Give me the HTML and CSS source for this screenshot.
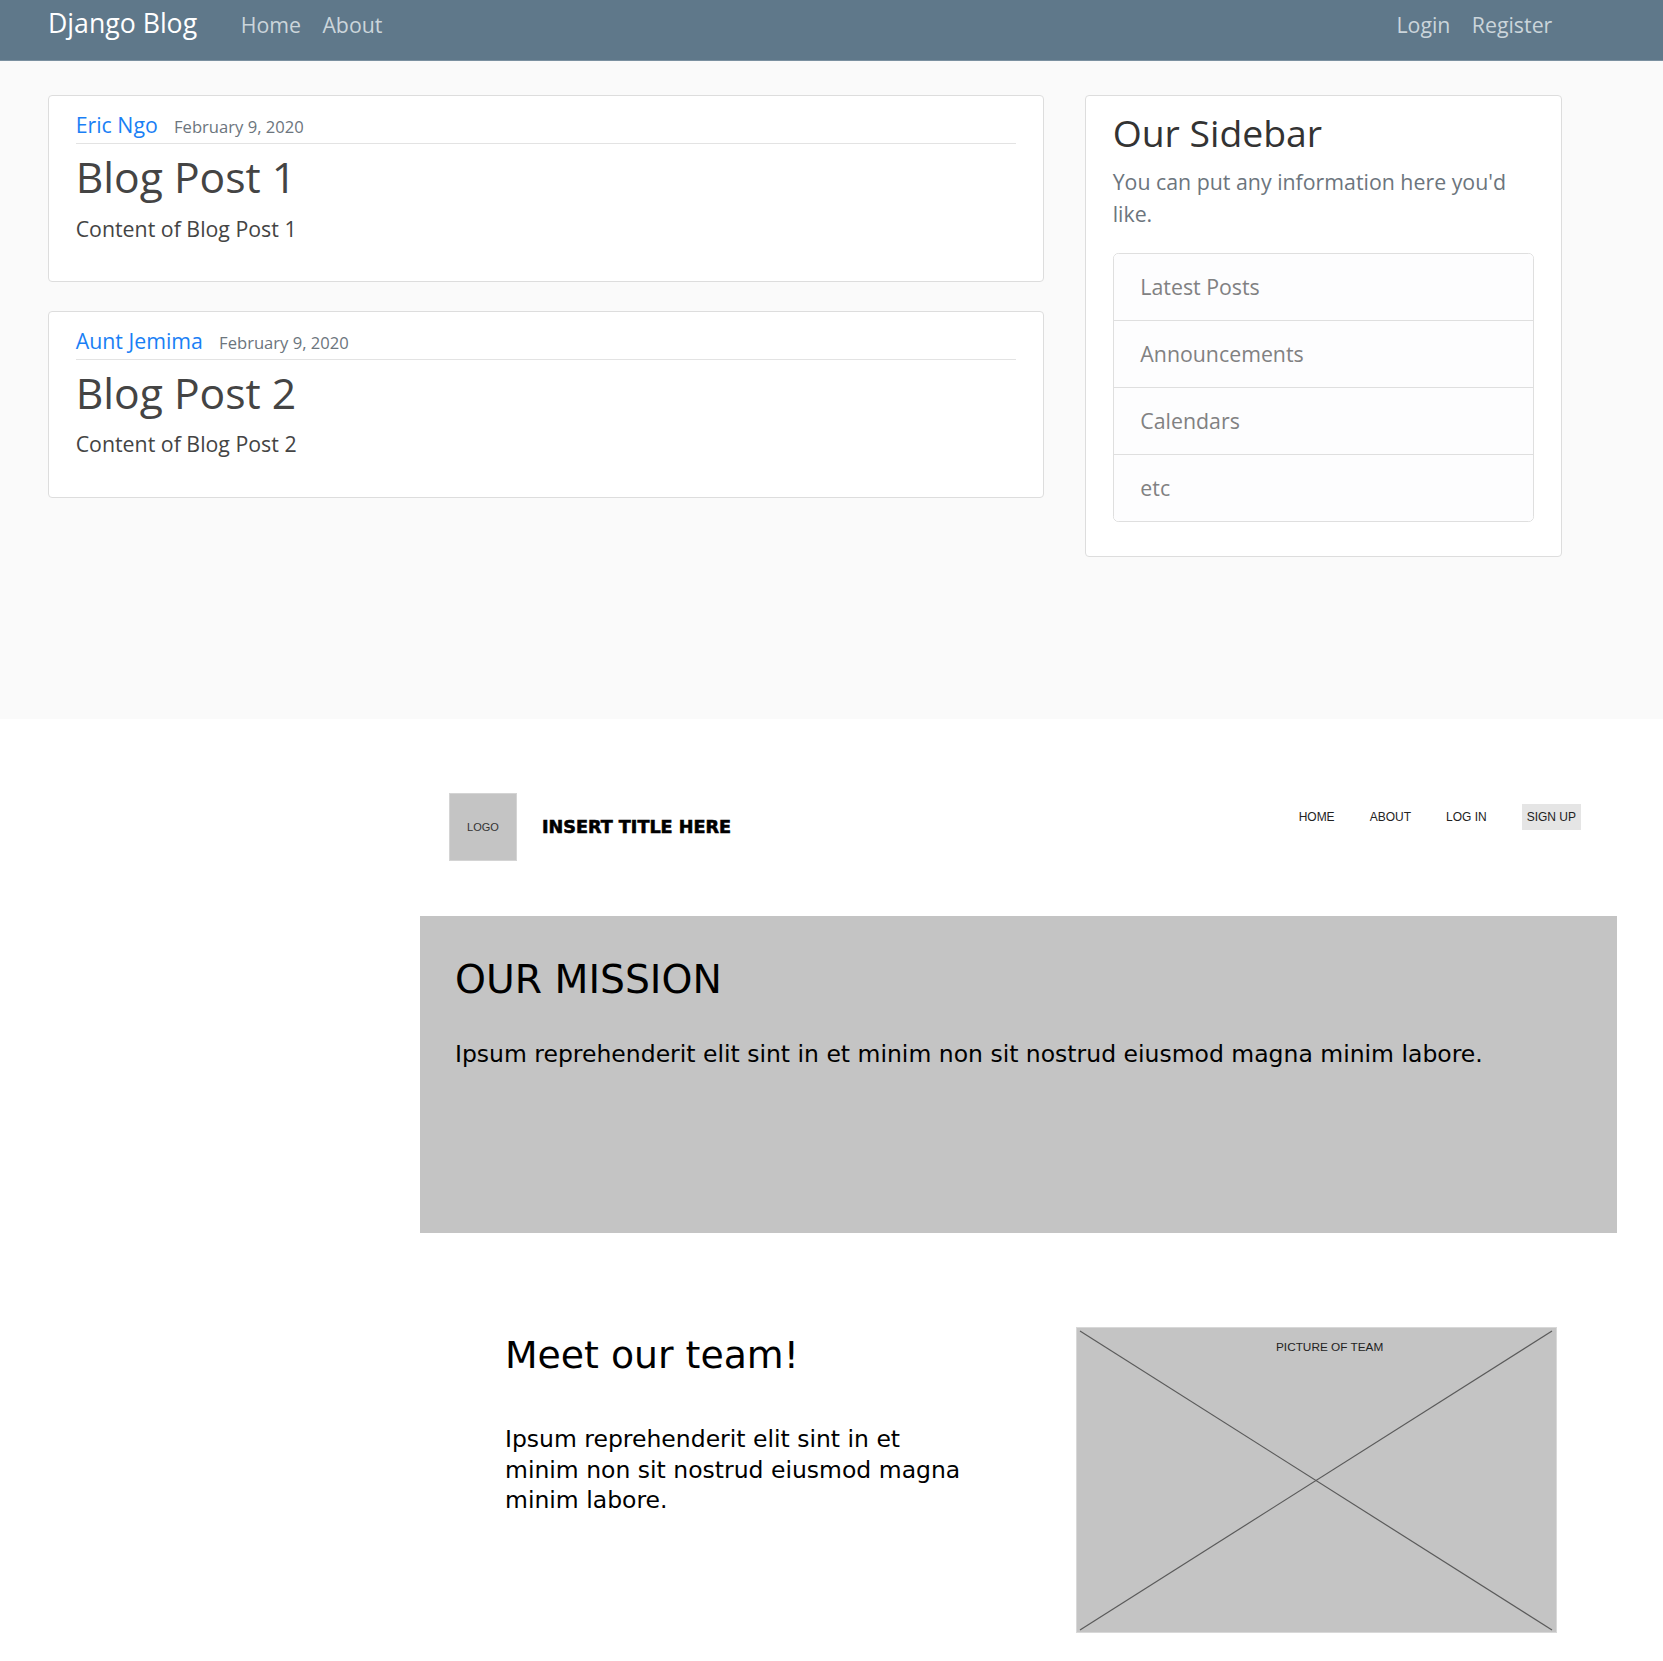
FILE: index.html
```html
<!DOCTYPE html>
<html lang="en">
<head>
<meta charset="utf-8">
<title>Django Blog</title>
<link rel="stylesheet" href="styles.css">
</head>
<body>
<section class="blog">
  <header class="site-header">
    <nav class="nav-inner">
      <a class="brand" href="#">Django Blog</a>
      <div class="nav-group">
        <a class="nav-link" href="#">Home</a>
        <a class="nav-link" href="#">About</a>
      </div>
      <div class="nav-group nav-right">
        <a class="nav-link" href="#">Login</a>
        <a class="nav-link" href="#">Register</a>
      </div>
    </nav>
  </header>
  <main class="blog-main">
    <div class="posts">
      <article class="content-section">
        <div class="article-metadata">
          <a class="author" href="#">Eric Ngo</a> <small class="date">February 9, 2020</small>
        </div>
        <h2 class="article-title">Blog Post 1</h2>
        <p class="article-content">Content of Blog Post 1</p>
      </article>
      <article class="content-section">
        <div class="article-metadata">
          <a class="author" href="#">Aunt Jemima</a> <small class="date">February 9, 2020</small>
        </div>
        <h2 class="article-title">Blog Post 2</h2>
        <p class="article-content">Content of Blog Post 2</p>
      </article>
    </div>
    <aside class="sidebar">
      <div class="content-section side-section">
        <h3 class="side-title">Our Sidebar</h3>
        <p class="text-muted">You can put any information here you'd like.</p>
        <ul class="list-group">
          <li class="list-item">Latest Posts</li>
          <li class="list-item">Announcements</li>
          <li class="list-item">Calendars</li>
          <li class="list-item">etc</li>
        </ul>
      </div>
    </aside>
  </main>
</section>

<section class="wire">
  <header class="wire-header">
    <div class="logo">LOGO</div>
    <div class="wire-title">INSERT TITLE HERE</div>
    <nav class="wire-nav">
      <a href="#">HOME</a>
      <a href="#">ABOUT</a>
      <a href="#">LOG IN</a>
      <a href="#" class="signup">SIGN UP</a>
    </nav>
  </header>
  <div class="mission">
    <h2 class="mission-title">OUR MISSION</h2>
    <p class="mission-text">Ipsum reprehenderit elit sint in et minim non sit nostrud eiusmod magna minim labore.</p>
  </div>
  <div class="team">
    <div class="team-text">
      <h2 class="team-title">Meet our team!</h2>
      <p class="team-desc">Ipsum reprehenderit elit sint in et minim non sit nostrud eiusmod magna minim labore.</p>
    </div>
    <div class="team-pic">
      <svg class="pic-x" viewBox="0 0 481 306" preserveAspectRatio="none">
        <line x1="3" y1="3" x2="477" y2="304" stroke="#5a5a5a" stroke-width="1.2"/>
        <line x1="477" y1="3" x2="3" y2="304" stroke="#5a5a5a" stroke-width="1.2"/>
      </svg>
      <span class="pic-label">PICTURE OF TEAM</span>
    </div>
  </div>
</section>
</body>
</html>
```

FILE: styles.css
```css
* { box-sizing: border-box; }

html, body {
  margin: 0;
  padding: 0;
  background: #ffffff;
}

/* ---------- Blog (top) ---------- */
.blog {
  height: 719px;
  background: #fafafa;
  font-family: "Open Sans", "Noto Sans", sans-serif;
  color: #333333;
}

.site-header {
  height: 61px;
  background: #5f788a;
  border-bottom: 1px solid #7b90a0;
}

.nav-inner {
  width: 1515px;
  margin-left: 48px;
  display: flex;
  align-items: baseline;
  padding-top: 3px;
}

.brand {
  font-size: 26.67px;
  line-height: 40px;
  color: #ffffff;
  text-decoration: none;
  margin-right: 33px;
}

.nav-group {
  display: flex;
  align-items: baseline;
}

.nav-right {
  margin-left: auto;
}

.nav-link {
  font-size: 21.33px;
  line-height: 32px;
  padding: 0 10.67px;
  color: #cbd5db;
  text-decoration: none;
}

.blog-main {
  width: 1514px;
  margin-left: 48px;
  padding-top: 34px;
  display: grid;
  grid-template-columns: 996px 477px;
  column-gap: 41px;
  align-items: start;
}

.content-section {
  background: #ffffff;
  border: 1px solid #dddddd;
  border-radius: 4px;
  padding: 13.33px 26.67px;
  margin-bottom: 29px;
}

.article-metadata {
  font-size: 21.33px;
  line-height: 32px;
  padding-bottom: 1.33px;
  margin-bottom: 5.33px;
  border-bottom: 1px solid #e3e3e3;
}

.author {
  color: #1a7ff5;
  text-decoration: none;
  margin-right: 10.67px;
}

.date {
  font-size: 16.6px;
  line-height: 1;
  color: #6c757d;
}

.article-title {
  font-size: 42.67px;
  font-weight: 400;
  line-height: 1.2;
  color: #444444;
  margin: 7px 0 10.67px;
}

.article-content {
  font-size: 21.33px;
  line-height: 32px;
  color: #444444;
  margin: 0 0 23px;
}

.side-section {
  margin-bottom: 0;
}

.side-title {
  font-size: 37.33px;
  font-weight: 400;
  line-height: 1.2;
  color: #333333;
  margin: 2px 0 10.67px;
}

.text-muted {
  font-size: 21.33px;
  line-height: 32px;
  color: #6c757d;
  margin: -1px 0 23px;
}

.list-group {
  list-style: none;
  margin: 0 0 21.33px;
  padding: 0;
  border: 1px solid #dfdfdf;
  border-radius: 5.33px;
  overflow: hidden;
}

.list-item {
  font-size: 21.33px;
  line-height: 32px;
  padding: 17px 26.67px 16px;
  background: #fdfdfe;
  color: #818182;
  border-top: 1px solid #dfdfdf;
  height: 67px;
}

.list-item:first-child {
  border-top: none;
  height: 66px;
}

/* ---------- Wireframe (bottom) ---------- */
.wire {
  margin-left: 420px;
  width: 1197px;
  padding-top: 74px;
  padding-bottom: 28px;
  font-family: "DejaVu Sans", "Liberation Sans", sans-serif;
  color: #000000;
}

.wire-header {
  display: flex;
  align-items: center;
  padding: 0 36px 0 29px;
}

.logo {
  width: 68px;
  height: 68px;
  background: #c4c4c4;
  border: 1px solid #d4d4d4;
  display: flex;
  align-items: center;
  justify-content: center;
  font-family: "Liberation Sans", Arial, sans-serif;
  font-size: 11px;
  color: #333333;
}

.wire-title {
  margin-left: 25px;
  font-weight: 700;
  font-size: 17.6px;
  -webkit-text-stroke: 0.6px #000000;
  color: #000000;
}

.wire-nav {
  margin-left: auto;
  align-self: flex-start;
  margin-top: 11px;
  display: flex;
  gap: 35px;
}

.wire-nav a {
  font-family: "Liberation Sans", Arial, sans-serif;
  font-size: 12px;
  line-height: 26px;
  color: #222222;
  text-decoration: none;
}

.wire-nav .signup {
  background: #e5e5e5;
  padding: 0 5px;
}

.mission {
  margin-top: 55px;
  height: 317px;
  background: #c4c4c4;
  padding: 44px 35px 0;
}

.mission-title {
  font-size: 39.3px;
  font-weight: 400;
  line-height: 1;
  margin: 0;
  color: #000000;
}

.mission-text {
  font-size: 23.5px;
  line-height: 29.5px;
  margin: 40.6px 0 0;
  color: #000000;
}

.team {
  margin-top: 94px;
  padding-left: 85px;
  display: flex;
  align-items: flex-start;
}

.team-text {
  width: 462px;
  padding-top: 10px;
}

.team-title {
  font-size: 37.8px;
  font-weight: 400;
  line-height: 1;
  margin: 0;
  color: #000000;
}

.team-desc {
  font-size: 23.5px;
  line-height: 30.7px;
  margin: 49px 0 0;
  color: #000000;
}

.team-pic {
  position: relative;
  margin-left: 109px;
  width: 481px;
  height: 306px;
  background: #c4c4c4;
  border: 1px solid #d8d8d8;
}

.pic-x {
  display: block;
  width: 100%;
  height: 100%;
}

.pic-label {
  position: absolute;
  top: 12px;
  left: 199px;
  font-family: "Liberation Sans", Arial, sans-serif;
  font-size: 11.8px;
  color: #222222;
}
```
